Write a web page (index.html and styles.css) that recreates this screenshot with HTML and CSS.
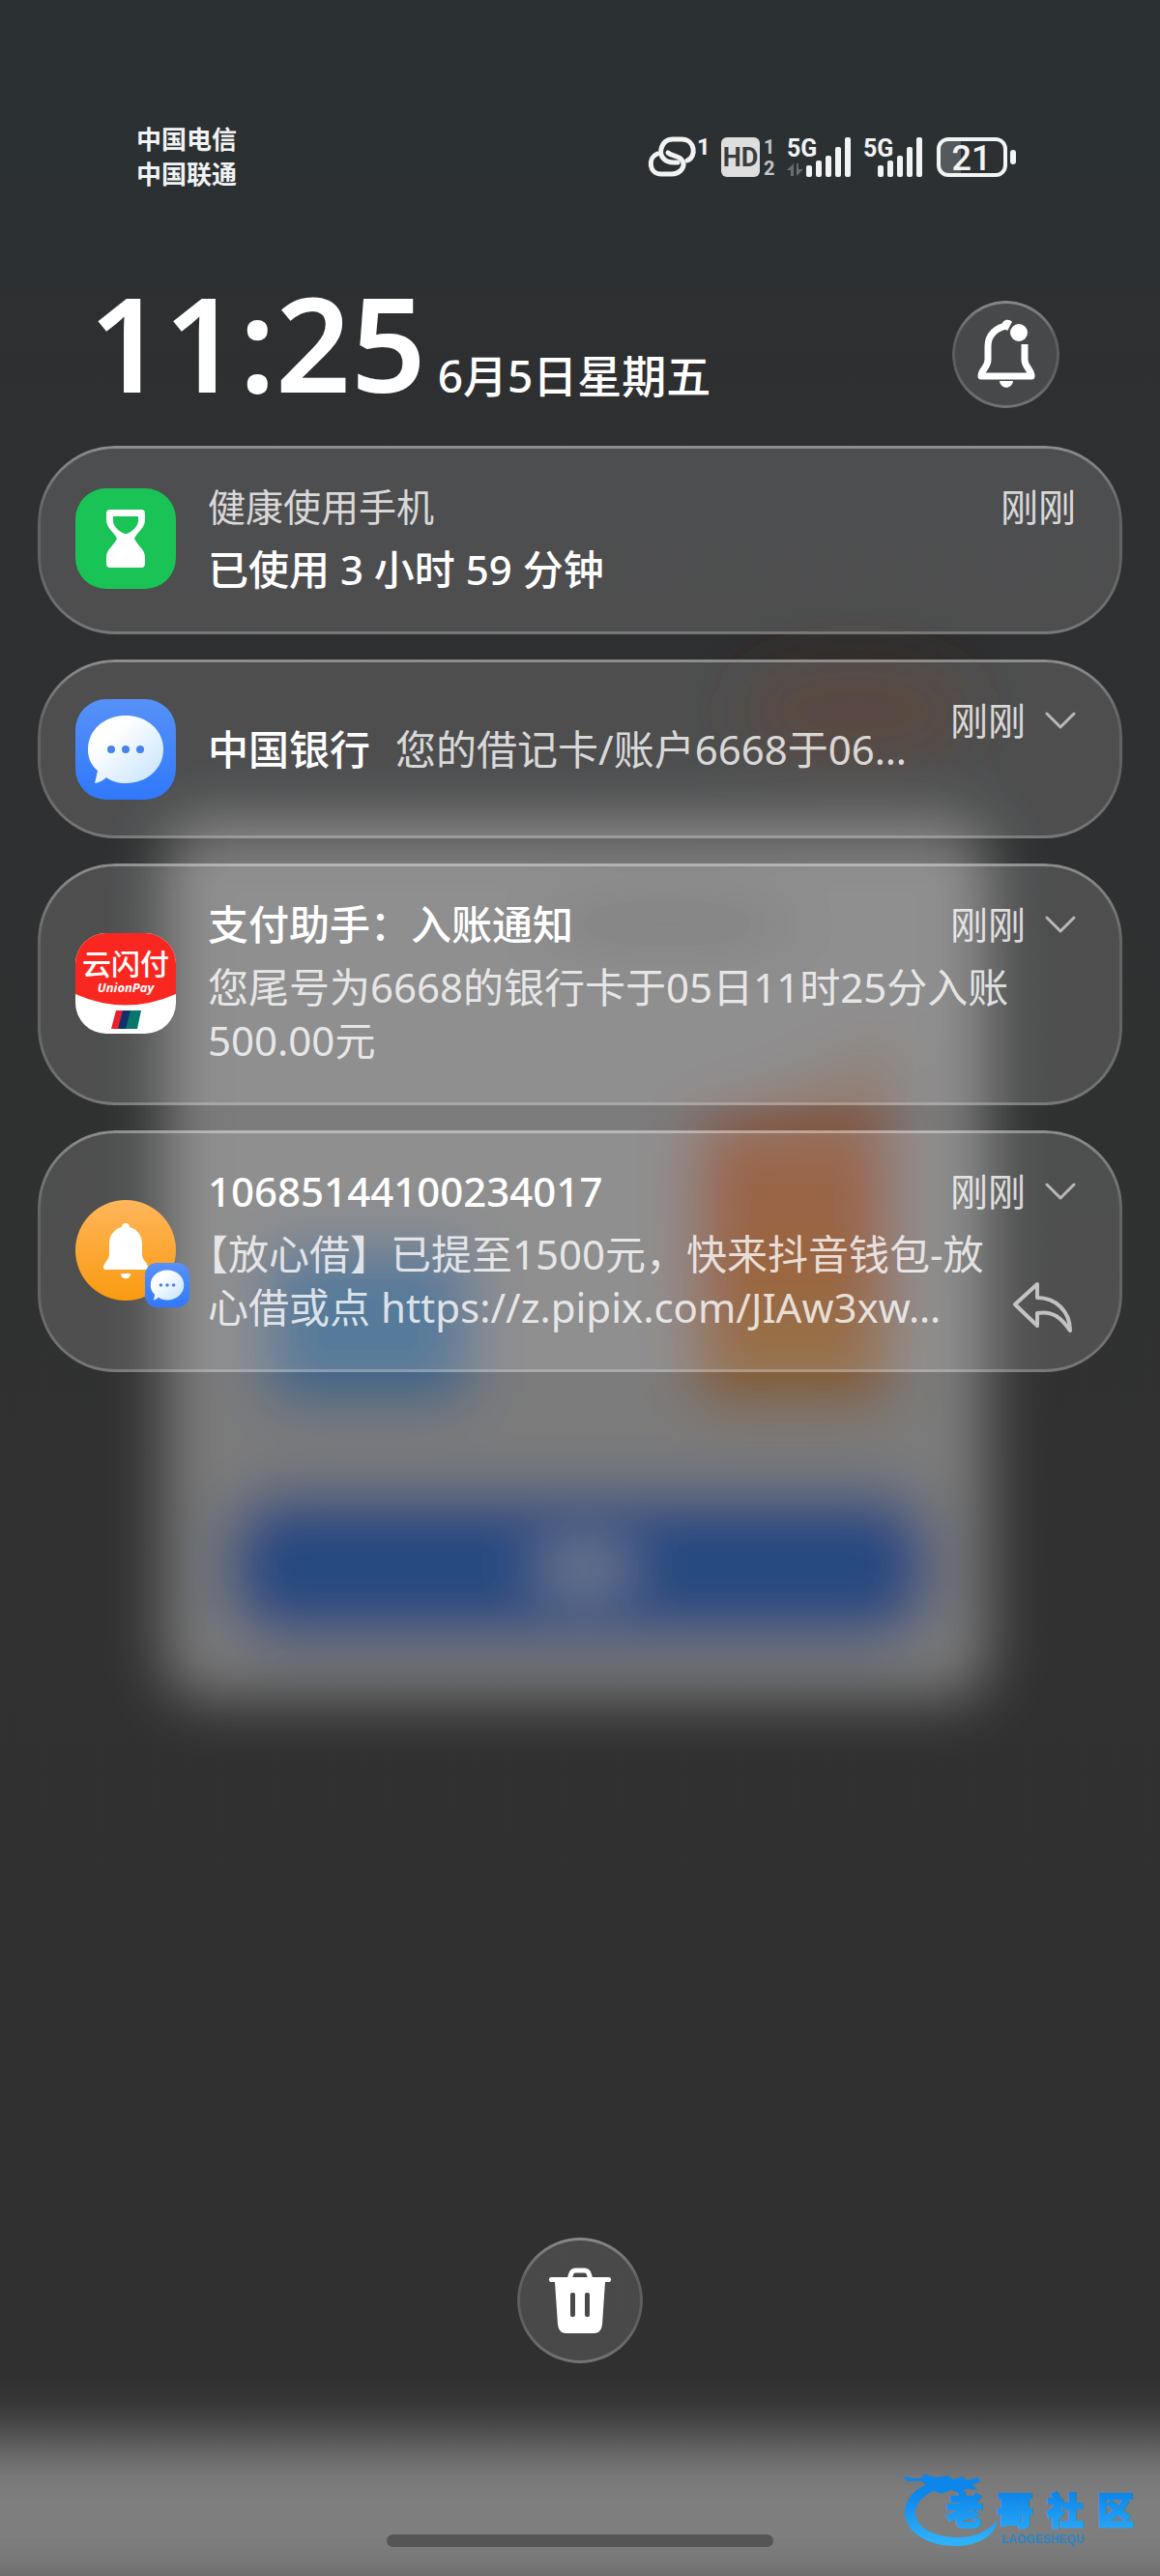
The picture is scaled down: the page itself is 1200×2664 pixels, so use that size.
FILE: index.html
```html
<!DOCTYPE html>
<html lang="zh-CN">
<head>
    <meta charset="UTF-8">
    <meta name="viewport" content="width=device-width, initial-scale=1.0">
    <title>通知中心</title>
    <link rel="stylesheet" href="styles.css">
</head>
<body>

    <!-- Blurred app behind the shade -->
    <svg class="backdrop" viewBox="0 0 1200 2664" preserveAspectRatio="none" aria-hidden="true">
        <defs>
            <filter id="blur" x="-30%" y="-30%" width="160%" height="160%">
                <feGaussianBlur stdDeviation="30"/>
            </filter>
            <linearGradient id="orange" x1="0" y1="0" x2="0" y2="1">
                <stop offset="0" stop-color="#854e30"/>
                <stop offset="0.5" stop-color="#8a4a20"/>
                <stop offset="1" stop-color="#82602f"/>
            </linearGradient>
        </defs>
        <g filter="url(#blur)">
            <ellipse cx="885" cy="735" rx="120" ry="50" fill="#3d2c24"/>
            <rect x="170" y="850" width="852" height="906" rx="40" fill="#7c7c7c"/>
            <ellipse cx="690" cy="955" rx="140" ry="18" fill="#646464"/>
            <path d="M760 1150 L930 1070 V1170 H760Z" fill="#7d6a5e"/>
            <rect x="718" y="1155" width="204" height="298" rx="20" fill="url(#orange)"/>
            <rect x="275" y="1290" width="212" height="160" rx="20" fill="#386389"/>
            <rect x="235" y="1545" width="728" height="150" rx="60" fill="#284880"/>
            <rect x="560" y="1600" width="90" height="44" fill="#7d8494"/>
            <rect x="-200" y="2522" width="1600" height="165" fill="#7e7e7e"/>
        </g>
    </svg>

    <div class="shade">
        <header class="status-bar">
            <div class="carriers">
                <div>中国电信</div>
                <div>中国联通</div>
            </div>
            <div class="status-icons">
                <svg class="status-icon" width="64" height="48" viewBox="0 0 64 48">
                    <g fill="none" stroke="#f2f3f3" stroke-width="5" stroke-linecap="round">
                        <path d="M10 21 C0 25 1 42 14 42 H24 C35 42 40 33 35 27 C32 23 26 24 21 20"/>
                        <path d="M31 30 H27 C18 30 12 24 14 16 C16 8 21 6 26 6 H35 C49 6 51 24 41 28"/>
                    </g>
                    <text class="tiny" x="51" y="22">1</text>
                </svg>
                <svg class="status-icon" width="58" height="48" viewBox="0 0 58 48">
                    <rect x="1" y="4" width="40" height="41" rx="6" fill="#dedede"/>
                    <text class="hd" x="21" y="34" text-anchor="middle">HD</text>
                    <text class="tiny dim" x="45" y="21">1</text>
                    <text class="tiny dim" x="45" y="43">2</text>
                </svg>
                <svg class="status-icon" width="68" height="48" viewBox="0 0 68 48">
                    <text class="net" x="0" y="24">5G</text>
                    <path d="M0 38 L7 31 V44 H4 V38Z M10 31 H12 V37 H17 L10 44Z" fill="#686c6d"/>
                    <g fill="#f2f3f3">
                        <rect x="20" y="33" width="6" height="12" rx="2"/>
                        <rect x="30" y="28" width="6" height="17" rx="2"/>
                        <rect x="40" y="23" width="6" height="22" rx="2"/>
                        <rect x="50" y="14" width="6" height="31" rx="2"/>
                        <rect x="60" y="4" width="6" height="41" rx="2"/>
                    </g>
                </svg>
                <svg class="status-icon" width="64" height="48" viewBox="0 0 64 48">
                    <text class="net" x="0" y="24">5G</text>
                    <g fill="#f2f3f3">
                        <rect x="15" y="33" width="6" height="12" rx="2"/>
                        <rect x="25" y="28" width="6" height="17" rx="2"/>
                        <rect x="35" y="23" width="6" height="22" rx="2"/>
                        <rect x="45" y="14" width="6" height="31" rx="2"/>
                        <rect x="55" y="4" width="6" height="41" rx="2"/>
                    </g>
                </svg>
                <svg class="status-icon battery" width="84" height="48" viewBox="0 0 84 48">
                    <path d="M12 7 H26 V43 H12 Q4 42 4 34 V16 Q4 8 12 7Z" fill="#545a5b"/>
                    <rect x="3" y="6" width="69" height="37" rx="10" fill="none" stroke="#f2f3f3" stroke-width="4"/>
                    <rect x="77" y="17" width="6" height="15" rx="3" fill="#f2f3f3"/>
                    <text class="level" x="37" y="38" text-anchor="middle">21</text>
                </svg>
            </div>
        </header>

        <section class="clock">
            <div class="clock-text">
                <time class="time">11:25</time>
                <span class="date">6月5日星期五</span>
            </div>
            <button class="round-button bell-button" type="button" aria-label="通知设置">
                <svg width="64" height="76" viewBox="0 0 64 76">
                    <path d="M34 8 C21 9 13 18 13 29 V43 C13 51 6 53 6 60 H58 C58 53 51 51 51 43 V27" fill="none" stroke="#fff" stroke-width="7" stroke-linejoin="round"/>
                    <path d="M27 9 C27 1 35 0 38 4 L33 13Z" fill="#fff"/>
                    <circle cx="45" cy="15" r="9" fill="#fff"/>
                    <path d="M25 65 H39 C38 74 26 74 25 65Z" fill="#fff"/>
                </svg>
            </button>
        </section>

        <main class="notifications">
            <article class="card">
                <svg class="app-icon" viewBox="0 0 104 104">
                    <rect width="104" height="104" rx="32" fill="#19c356"/>
                    <path d="M36 22 H68 Q72 22 72 26 V33 C72 41 64 45 61 52 C64 59 72 63 72 71 V78 Q72 82 68 82 H36 Q32 82 32 78 V71 C32 63 40 59 43 52 C40 45 32 41 32 33 V26 Q32 22 36 22Z" fill="#fff"/>
                    <path d="M39 29 H65 V34 C65 40 56 47 52 47 C48 47 39 40 39 34Z" fill="#19c356"/>
                </svg>
                <div class="content">
                    <div class="head">
                        <h2 class="app-name">健康使用手机</h2>
                        <span class="when">刚刚</span>
                    </div>
                    <p class="message strong">已使用 3 小时 59 分钟</p>
                </div>
            </article>

            <article class="card card-single">
                <svg class="app-icon" viewBox="0 0 104 104">
                    <defs>
                        <linearGradient id="sms" x1="0" y1="0" x2="0" y2="1">
                            <stop offset="0" stop-color="#5791f8"/>
                            <stop offset="1" stop-color="#3079fb"/>
                        </linearGradient>
                        <linearGradient id="bubble" x1="0" y1="0" x2="1" y2="1">
                            <stop offset="0.3" stop-color="#fff"/>
                            <stop offset="1" stop-color="#c2e1ff"/>
                        </linearGradient>
                    </defs>
                    <rect width="104" height="104" rx="32" fill="url(#sms)"/>
                    <path d="M52 17 C74 17 91 32 91 52 C91 72 74 87 52 87 C44 87 38 85 32 81 Q27 86 20 87 Q22 79 23 74 C16 68 13 61 13 52 C13 32 30 17 52 17Z" fill="url(#bubble)"/>
                    <g fill="#4683ec">
                        <circle cx="37" cy="52" r="4"/>
                        <circle cx="52" cy="52" r="4"/>
                        <circle cx="67" cy="52" r="4"/>
                    </g>
                </svg>
                <div class="content single">
                    <h2 class="title">中国银行</h2>
                    <p class="message">您的借记卡/账户6668于06…</p>
                </div>
                <div class="meta">
                    <span class="when">刚刚</span>
                    <button class="expand" type="button" aria-label="展开">
                        <svg width="32" height="20" viewBox="0 0 32 20"><path d="M2 3 L16 17 L30 3"/></svg>
                    </button>
                </div>
            </article>

            <article class="card">
                <svg class="app-icon" viewBox="0 0 104 104">
                    <defs>
                        <clipPath id="tile"><rect width="104" height="104" rx="32"/></clipPath>
                    </defs>
                    <g clip-path="url(#tile)">
                        <rect width="104" height="104" fill="#fff"/>
                        <path d="M0 0 H104 V63 Q52 86 0 63Z" fill="#fa2720"/>
                        <path d="M42 80 H50 L45 99 H37Z" fill="#e8202c"/>
                        <path d="M49 80 H58 L53 99 H44Z" fill="#12306b"/>
                        <path d="M57 80 H68 L64 99 H52Z" fill="#08766b"/>
                    </g>
                    <text class="pay-name" x="52" y="43" text-anchor="middle">云闪付</text>
                    <text class="pay-brand" x="52" y="61" text-anchor="middle">UnionPay</text>
                </svg>
                <div class="content">
                    <div class="head">
                        <h2 class="title">支付助手：入账通知</h2>
                        <div class="meta">
                            <span class="when">刚刚</span>
                            <button class="expand" type="button" aria-label="展开">
                                <svg width="32" height="20" viewBox="0 0 32 20"><path d="M2 3 L16 17 L30 3"/></svg>
                            </button>
                        </div>
                    </div>
                    <p class="message wrap">您尾号为6668的银行卡于05日11时25分入账500.00元</p>
                </div>
            </article>

            <article class="card">
                <div class="icon-stack">
                    <svg class="app-icon" viewBox="0 0 104 104">
                        <defs>
                            <linearGradient id="amber" x1="0" y1="0" x2="0" y2="1">
                                <stop offset="0" stop-color="#ffb65a"/>
                                <stop offset="1" stop-color="#fa9a10"/>
                            </linearGradient>
                        </defs>
                        <circle cx="52" cy="52" r="52" fill="url(#amber)"/>
                        <path d="M52 24 Q56 24 56 28 C64 30 69 37 69 45 V56 C69 63 75 64 75 70 Q75 72 72 72 H32 Q29 72 29 70 C29 64 35 63 35 56 V45 C35 37 40 30 48 28 Q48 24 52 24Z" fill="#fff"/>
                        <path d="M47 76 H57 C57 83 47 83 47 76Z" fill="#fff"/>
                    </svg>
                    <svg class="badge" viewBox="0 0 104 104">
                        <rect width="104" height="104" rx="28" fill="url(#sms)"/>
                        <path d="M52 17 C74 17 91 32 91 52 C91 72 74 87 52 87 C44 87 38 85 32 81 Q27 86 20 87 Q22 79 23 74 C16 68 13 61 13 52 C13 32 30 17 52 17Z" fill="url(#bubble)"/>
                        <g fill="#4683ec">
                            <circle cx="37" cy="52" r="4"/>
                            <circle cx="52" cy="52" r="4"/>
                            <circle cx="67" cy="52" r="4"/>
                        </g>
                    </svg>
                </div>
                <div class="content">
                    <div class="head">
                        <h2 class="title">10685144100234017</h2>
                        <div class="meta">
                            <span class="when">刚刚</span>
                            <button class="expand" type="button" aria-label="展开">
                                <svg width="32" height="20" viewBox="0 0 32 20"><path d="M2 3 L16 17 L30 3"/></svg>
                            </button>
                        </div>
                    </div>
                    <div class="reply-row">
                        <p class="message">【放心借】已提至1500元，快来抖音钱包-放心借或点 https://z.pipix.com/JIAw3xw…</p>
                        <button class="reply" type="button" aria-label="回复">
                            <svg width="66" height="54" viewBox="0 0 66 54">
                                <path d="M26 3 L3 24 L26 46 V33 C42 30 51 38 60 51 C60 31 45 17 26 17Z"/>
                            </svg>
                        </button>
                    </div>
                </div>
            </article>
        </main>

        <footer class="bottom">
            <button class="round-button clear-button" type="button" aria-label="清除全部通知">
                <svg width="64" height="68" viewBox="0 0 64 68">
                    <path d="M21 12 L23 6 Q24 3 28 3 H36 Q40 3 41 6 L43 12" fill="none" stroke="#fff" stroke-width="5"/>
                    <path d="M2 10 H62 Q64 10 64 12 V13 Q64 15 62 15 H58 L55 59 Q54 68 46 68 H18 Q10 68 9 59 L6 15 H2 Q0 15 0 13 V12 Q0 10 2 10Z" fill="#fff"/>
                    <rect x="22" y="26" width="5" height="25" rx="2" fill="#48494a"/>
                    <rect x="37" y="26" width="5" height="25" rx="2" fill="#48494a"/>
                </svg>
            </button>
            <div class="home-bar"></div>
        </footer>
    </div>

    <!-- Community mark -->
    <svg class="watermark" width="250" height="80" viewBox="0 0 250 80">
        <defs>
            <linearGradient id="azure" gradientUnits="userSpaceOnUse" x1="0" y1="22" x2="0" y2="70">
                <stop offset="0" stop-color="#0c86ea"/>
                <stop offset="1" stop-color="#2fb0fa"/>
            </linearGradient>
        </defs>
        <path d="M28 11 C10 17 1 30 2 43 C4 63 27 76 54 76 C78 76 96 65 98 49 C89 60 75 67 58 67 C34 67 15 58 13 43 C12 32 23 21 40 16Z" fill="url(#azure)"/>
        <path d="M0 4 L12 6 L22 5 L20 1 L34 5 L46 3 L52 7 L62 4 L66 8 L78 5 L80 10 L72 12 L77 18 L66 17 L58 21 L50 18 L40 22 L32 19 L26 16 L20 9 L4 9Z" fill="url(#azure)"/>
        <text class="mark-name" x="45 97 149 201" y="53" fill="url(#azure)" stroke="url(#azure)">老哥社区</text>
        <text class="mark-sub" x="102" y="73">LAOGESHEQU</text>
    </svg>

</body>
</html>
```

FILE: styles.css
```css
* {
    box-sizing: border-box;
}
body {
    margin: 0;
    position: relative;
    min-height: 100vh;
    overflow-x: hidden;
    font-family: "Noto Sans", "Noto Sans CJK SC", sans-serif;
    color: #fff;
    background: linear-gradient(#2b3032 0, #2b3032 6%, #2e2f31 14%, #2f3031 30%, #303130 60%, #303030 100%);
}
h2, p {
    margin: 0;
}
button {
    border: none;
    padding: 0;
    margin: 0;
    background: none;
    color: inherit;
    cursor: pointer;
}
svg {
    display: block;
    flex: none;
}
.backdrop {
    position: absolute;
    top: 0;
    left: 0;
    width: 100%;
    height: 100%;
}
.shade {
    position: relative;
    display: flex;
    flex-direction: column;
    min-height: 100vh;
    padding-top: 126px;
}

/* Status bar */
.status-bar {
    display: flex;
    justify-content: space-between;
    align-items: center;
    padding: 0 148px 0 141px;
}
.carriers {
    font-size: 26px;
    font-weight: 700;
    line-height: 36px;
    color: #f2f3f3;
}
.status-icons {
    display: flex;
    align-items: center;
    gap: 11px;
}
.status-icon text {
    font-family: Roboto, sans-serif;
    font-weight: 700;
    fill: #f2f3f3;
}
.status-icon .tiny {
    font-size: 24px;
}
.status-icon .dim {
    font-size: 20px;
    fill: #c4c6c6;
}
.status-icon .hd {
    font-size: 27px;
    fill: #3a3d3e;
}
.status-icon .net {
    font-size: 25px;
}
.status-icon .level {
    font-size: 36px;
    font-weight: 500;
}

/* Clock row */
.clock {
    display: flex;
    justify-content: space-between;
    align-items: flex-start;
    padding: 0 104px 0 92px;
    margin-top: 113px;
}
.clock-text {
    display: flex;
    align-items: baseline;
    gap: 12px;
}
.time {
    font-size: 136px;
    font-weight: 600;
    line-height: 86px;
}
.date {
    font-size: 46px;
    font-weight: 500;
    line-height: 56px;
}
.round-button {
    position: relative;
    display: flex;
    justify-content: center;
    align-items: center;
    border-radius: 50%;
    background: rgba(255, 255, 255, 0.12);
}
.bell-button {
    width: 111px;
    height: 111px;
}
.clear-button {
    width: 130px;
    height: 130px;
}

/* Light edge that fades out along the sides */
.card::before,
.round-button::before {
    content: "";
    position: absolute;
    inset: 0;
    padding: 3px;
    border-radius: inherit;
    background: linear-gradient(rgba(255, 255, 255, 0.36), rgba(255, 255, 255, 0.12) 35%, rgba(255, 255, 255, 0.12) 65%, rgba(255, 255, 255, 0.24));
    mask: linear-gradient(#000 0 0) content-box exclude, linear-gradient(#000 0 0);
    pointer-events: none;
}

/* Notifications */
.notifications {
    display: flex;
    flex-direction: column;
    gap: 26px;
    margin: 39px 39px 0;
}
.card {
    position: relative;
    display: flex;
    align-items: center;
    gap: 33px;
    padding: 37px 48px 40px 39px;
    border-radius: 80px;
    background: rgba(255, 255, 255, 0.15);
}
.card-single {
    min-height: 185px;
    padding-bottom: 36px;
}
.app-icon {
    width: 104px;
    height: 104px;
}
.icon-stack {
    position: relative;
}
.badge {
    position: absolute;
    right: -14px;
    bottom: -7px;
    width: 46px;
    height: 46px;
}
.content {
    flex: 1;
    min-width: 0;
    display: flex;
    flex-direction: column;
    gap: 11px;
}
.content.single {
    flex-direction: row;
    gap: 26px;
}
.head {
    display: flex;
    justify-content: space-between;
    align-items: center;
}
.app-name,
.when {
    font-size: 39px;
    font-weight: 400;
    line-height: 52px;
    color: rgba(255, 255, 255, 0.8);
}
.title {
    font-size: 42px;
    font-weight: 500;
    line-height: 52px;
    white-space: nowrap;
}
.message {
    font-size: 42px;
    line-height: 55px;
    color: rgba(255, 255, 255, 0.8);
    text-spacing-trim: trim-start;
}
.content.single .message {
    line-height: 52px;
    white-space: nowrap;
}
.message.strong {
    font-weight: 500;
    color: #fff;
}
.message.wrap {
    padding-right: 60px;
}
.meta {
    display: flex;
    align-items: center;
    gap: 20px;
}
.card-single .meta {
    align-self: flex-start;
}
.expand path {
    fill: none;
    stroke: rgba(255, 255, 255, 0.6);
    stroke-width: 3;
    stroke-linecap: round;
    stroke-linejoin: round;
}
.reply-row {
    display: flex;
    align-items: flex-end;
    gap: 3px;
}
.reply-row .message {
    flex: 1;
}
.reply path {
    fill: none;
    stroke: rgba(255, 255, 255, 0.65);
    stroke-width: 4;
    stroke-linejoin: round;
}
.pay-name {
    font-size: 30px;
    font-weight: 500;
    fill: #fff;
}
.pay-brand {
    font-family: "Open Sans", sans-serif;
    font-size: 13px;
    font-weight: 700;
    font-style: italic;
    fill: #fff;
}

/* Bottom */
.bottom {
    display: flex;
    flex-direction: column;
    align-items: center;
    gap: 177px;
    margin-top: auto;
    padding-bottom: 30px;
}
.home-bar {
    width: 400px;
    max-width: 60%;
    height: 13px;
    border-radius: 7px;
    background: #555;
}
.watermark {
    position: absolute;
    right: 16px;
    bottom: 27px;
}
.mark-name {
    font-size: 38px;
    font-weight: 900;
    stroke-width: 2;
}
.mark-sub {
    font-family: "Liberation Sans", sans-serif;
    font-size: 12px;
    font-weight: 700;
    fill: #2b86c4;
}
```
